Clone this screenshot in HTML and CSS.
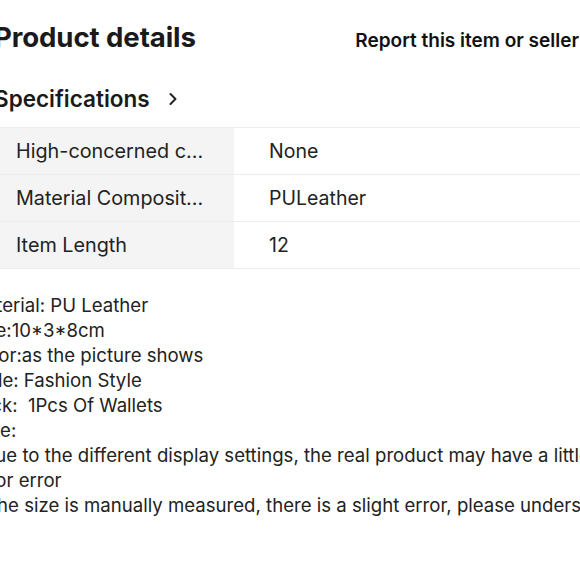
FILE: index.html
```html
<!DOCTYPE html>
<html>
<head>
<meta charset="utf-8">
<link rel="stylesheet" href="styles.css">
</head>
<body>
<div class="page">
  <div class="header">
    <h1 class="title">Product details</h1>
    <a class="report">Report this item or seller</a>
  </div>
  <div class="spec-head">
    <span class="spec-title">Specifications</span>
    <svg class="chev" width="14" height="14" viewBox="0 0 14 14"><path d="M4.5 2 L9.5 7 L4.5 12" fill="none" stroke="#222" stroke-width="2" stroke-linecap="round" stroke-linejoin="round"/></svg>
  </div>
  <div class="table">
    <div class="row"><div class="k">High-concerned c...</div><div class="v">None</div></div>
    <div class="row"><div class="k">Material Composit...</div><div class="v">PULeather</div></div>
    <div class="row"><div class="k">Item Length</div><div class="v">12</div></div>
  </div>
  <div class="desc">
    <p>Material: PU Leather</p>
    <p>Size:10*3*8cm</p>
    <p>Color:as the picture shows</p>
    <p>Style: Fashion Style</p>
    <p>Pack:&nbsp; 1Pcs Of Wallets</p>
    <p>Note:</p>
    <p>1.Due to the different display settings, the real product may have a little color error</p>
    <p>2.The size is manually measured, there is a slight error, please understand</p>
  </div>
</div>
</body>
</html>
```
FILE: styles.css
```css
html, body {
  margin: 0;
  padding: 0;
  background: #fff;
  overflow: hidden;
}
body {
  font-family: "Inter", "Open Sans", sans-serif;
  color: #222;
}
.page {
  width: 640px;
  margin-left: -6px;
}
.header {
  display: flex;
  align-items: baseline;
  justify-content: space-between;
  padding-top: 20px;
}
.title {
  margin: 0;
  font-size: 27.6px;
  font-weight: 700;
  color: #1a1a1a;
  letter-spacing: -0.1px;
}
.report {
  font-size: 19px;
  font-weight: 600;
  color: #111;
  margin-right: 55px;
}
.spec-head {
  display: flex;
  align-items: center;
  gap: 16px;
  margin-top: 29px;
  height: 30px;
}
.spec-title {
  font-size: 22.5px;
  font-weight: 600;
  color: #1a1a1a;
}
.chev { margin-top: 2px; }
.table {
  margin-top: 14px;
  border-top: 1px solid #ececec;
  width: 700px;
}
.row {
  display: flex;
  height: 46px;
  border-bottom: 1px solid #ececec;
}
.k {
  width: 218px;
  padding-left: 22px;
  background: #f4f4f4;
  display: flex;
  align-items: center;
  font-size: 19.8px;
  color: #222;
}
.v {
  padding-left: 35px;
  display: flex;
  align-items: center;
  font-size: 19.5px;
  color: #222;
}
.desc {
  margin-top: 24px;
  margin-left: -25px;
  font-size: 18.6px;
  line-height: 25px;
  color: #222;
  width: 670px;
}
.desc p { margin: 0; }
```
